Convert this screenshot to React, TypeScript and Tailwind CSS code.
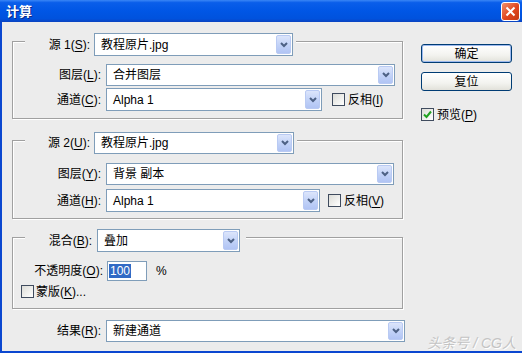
import React from "react";

const FONT = { fontFamily: '"Liberation Sans", "Noto Sans CJK SC", sans-serif' };

function Arrow() {
  return (
    <div className="ml-auto mr-[1px] h-[calc(100%-2px)] w-[15px] shrink-0 rounded-[2px] border border-[#B9CAF3] bg-[linear-gradient(to_bottom,#DCE5FB,#BFD0F7_60%,#B1C4F4)] flex items-center justify-center">
      <svg width="8" height="6" viewBox="0 0 8 6">
        <path d="M1 1 L4 4 L7 1" fill="none" stroke="#4D6185" strokeWidth="2" />
      </svg>
    </div>
  );
}

function Select({ className, text }: { className: string; text: string }) {
  return (
    <div className={"flex items-center bg-white border border-[#7F9DB9] " + className}>
      <span className="pl-[6px] text-[12px] leading-none whitespace-nowrap">{text}</span>
      <Arrow />
    </div>
  );
}

function Check({ checked = false }: { checked?: boolean }) {
  return (
    <div className="w-[13px] h-[13px] shrink-0 border border-[#3F4B5E] bg-[linear-gradient(135deg,#DCDCD7,#FFFFFF)] flex items-center justify-center">
      {checked && (
        <svg width="9" height="9" viewBox="0 0 9 9">
          <path d="M1 4.5 L3.5 7 L8 1.5" fill="none" stroke="#21A121" strokeWidth="2" />
        </svg>
      )}
    </div>
  );
}

function U({ c }: { c: string }) {
  return <span className="underline underline-offset-2">{c}</span>;
}

export default function App() {
  return (
    <div className="w-[522px] h-[353px] bg-[#ECECEC] flex flex-col relative overflow-hidden text-black" style={FONT}>
      {/* Title bar */}
      <div className="h-[22px] shrink-0 flex items-center bg-[linear-gradient(to_bottom,#3A86F6_0%,#0A5EEA_12%,#0056E5_50%,#0052DD_85%,#0B43C0_100%)]">
        <span className="ml-[6px] text-[13px] font-bold text-white leading-none [text-shadow:1px_1px_0_#0A2A8A]">计算</span>
        <div className="ml-auto mr-[2px] w-[19px] h-[19px] rounded-[3px] border border-white bg-[linear-gradient(135deg,#F0906C,#E0461E_55%,#C53A14)] flex items-center justify-center">
          <svg width="11" height="11" viewBox="0 0 11 11">
            <path d="M1.5 1.5 L9.5 9.5 M9.5 1.5 L1.5 9.5" stroke="white" strokeWidth="2" />
          </svg>
        </div>
      </div>

      {/* Body */}
      <div className="flex-1 flex border-l-2 border-b-2 border-[#0B47D0] text-[12px]">
        {/* Left column */}
        <div className="ml-[10px] w-[393px] flex flex-col">
          {/* Group 1 */}
          <div className="mt-[19px] w-[391px] border border-[#A0A0A0] shadow-[1px_1px_0_#fff,inset_1px_1px_0_#fff] pb-[7px] flex flex-col">
            <div className="-mt-[9px] ml-[12px] self-start flex items-center bg-[#ECECEC] pr-[3px] h-[23px]">
              <div className="w-[65px] text-right whitespace-nowrap">源 1(<U c="S" />):</div>
              <Select className="ml-[4px] w-[199px] h-[23px]" text="教程原片.jpg" />
            </div>
            <div className="mt-[8px] flex items-center h-[22px]">
              <div className="w-[88px] text-right whitespace-nowrap">图层(<U c="L" />):</div>
              <Select className="ml-[5px] w-[289px] h-[22px]" text="合并图层" />
            </div>
            <div className="mt-[2px] flex items-center h-[23px]">
              <div className="w-[88px] text-right whitespace-nowrap">通道(<U c="C" />):</div>
              <Select className="ml-[5px] w-[216px] h-[23px]" text="Alpha 1" />
              <div className="ml-[10px] flex items-center">
                <Check />
                <span className="ml-[3px] whitespace-nowrap">反相(<U c="I" />)</span>
              </div>
            </div>
          </div>

          {/* Group 2 */}
          <div className="mt-[21px] w-[391px] border border-[#A0A0A0] shadow-[1px_1px_0_#fff,inset_1px_1px_0_#fff] pb-[6px] flex flex-col">
            <div className="-mt-[9px] ml-[12px] self-start flex items-center bg-[#ECECEC] pr-[3px] h-[22px]">
              <div className="w-[65px] text-right whitespace-nowrap">源 2(<U c="U" />):</div>
              <Select className="ml-[4px] w-[200px] h-[22px]" text="教程原片.jpg" />
            </div>
            <div className="mt-[9px] flex items-center h-[22px]">
              <div className="w-[88px] text-right whitespace-nowrap">图层(<U c="Y" />):</div>
              <Select className="ml-[5px] w-[288px] h-[22px]" text="背景 副本" />
            </div>
            <div className="mt-[4px] flex items-center h-[23px]">
              <div className="w-[88px] text-right whitespace-nowrap">通道(<U c="H" />):</div>
              <Select className="ml-[5px] w-[214px] h-[23px]" text="Alpha 1" />
              <div className="ml-[8px] flex items-center">
                <Check />
                <span className="ml-[3px] whitespace-nowrap">反相(<U c="V" />)</span>
              </div>
            </div>
          </div>

          {/* Group 3 */}
          <div className="mt-[18px] w-[391px] border border-[#A0A0A0] shadow-[1px_1px_0_#fff,inset_1px_1px_0_#fff] pb-[10px] flex flex-col">
            <div className="-mt-[9px] ml-[12px] self-start flex items-center bg-[#ECECEC] pr-[6px] h-[23px]">
              <div className="w-[67px] text-right whitespace-nowrap">混合(<U c="B" />):</div>
              <Select className="ml-[5px] w-[143px] h-[23px]" text="叠加" />
            </div>
            <div className="mt-[9px] flex items-center h-[20px]">
              <div className="w-[90px] text-right whitespace-nowrap">不透明度(<U c="O" />):</div>
              <div className="ml-[4px] w-[40px] h-[20px] bg-white border border-[#7F9DB9] flex items-center pl-[1px]">
                <span className="bg-[#316AC5] text-white leading-[14px] px-[1px]">100</span>
              </div>
              <span className="ml-[9px]">%</span>
            </div>
            <div className="mt-[4px] ml-[8px] flex items-center h-[13px]">
              <Check />
              <span className="ml-[2px] whitespace-nowrap">蒙版(<U c="K" />)...</span>
            </div>
          </div>

          {/* Result */}
          <div className="mt-[11px] flex items-center h-[22px]">
            <div className="w-[89px] text-right whitespace-nowrap">结果(<U c="R" />):</div>
            <Select className="ml-[5px] w-[299px] h-[22px]" text="新建通道" />
          </div>
        </div>

        {/* Right column */}
        <div className="ml-[16px] w-[91px] flex flex-col">
          <div className="mt-[22px] h-[19px] w-[91px] rounded-[3px] border border-[#003C74] bg-[linear-gradient(to_bottom,#FFFFFF,#F3F3EF_60%,#E2E1DA)] shadow-[inset_0_0_0_1px_#9DB9EE] flex items-center justify-center leading-none">
            确定
          </div>
          <div className="mt-[9px] h-[19px] w-[91px] rounded-[3px] border border-[#003C74] bg-[linear-gradient(to_bottom,#FFFFFF,#F3F3EF_60%,#E2E1DA)] flex items-center justify-center leading-none">
            复位
          </div>
          <div className="mt-[17px] flex items-center h-[13px]">
            <Check checked />
            <span className="ml-[3px] whitespace-nowrap">预览(<U c="P" />)</span>
          </div>
        </div>
      </div>

      <div className="absolute right-[6px] bottom-[3px] text-[14px] leading-none text-[#C4C4C4] italic [text-shadow:1px_1px_0_#fff]">
        头条号 / CG人
      </div>
    </div>
  );
}
